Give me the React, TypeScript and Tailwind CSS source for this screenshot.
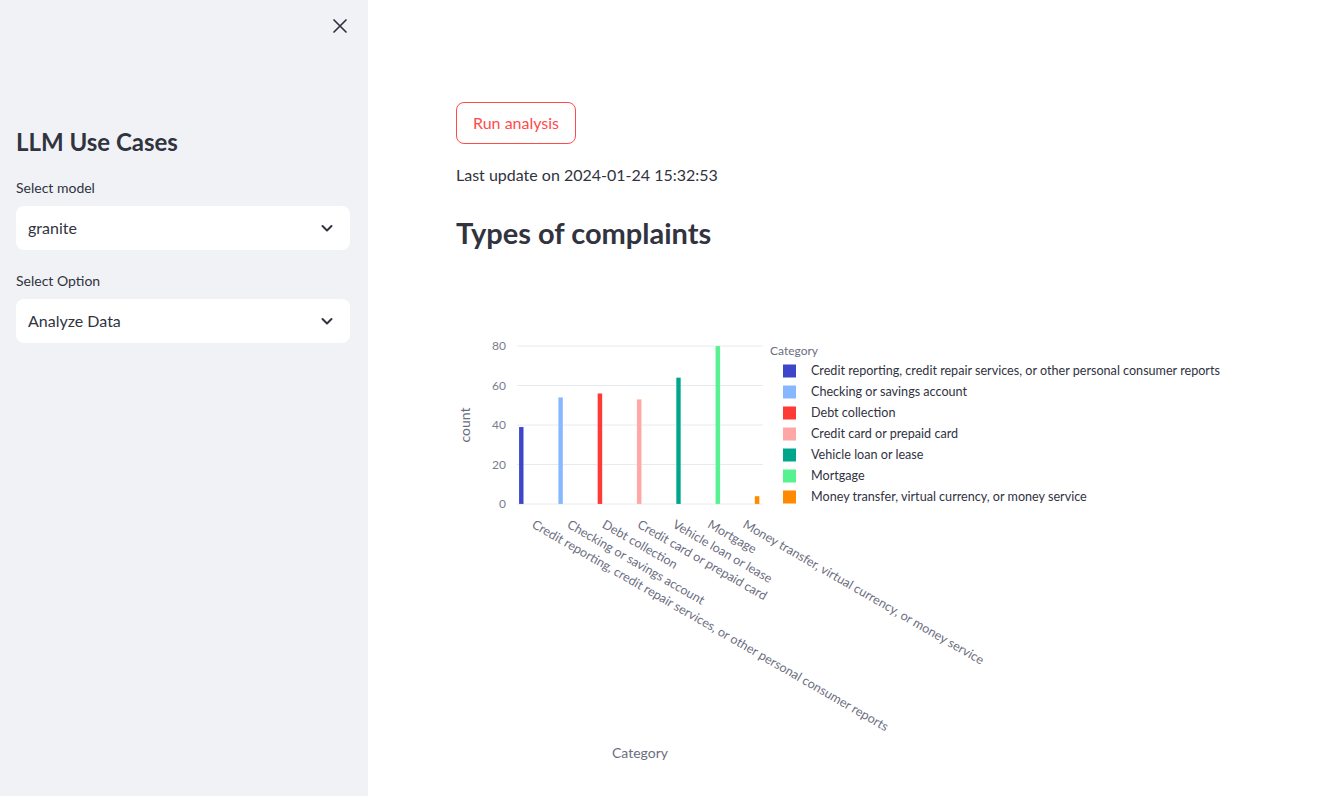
import React from "react";

const categories = [
  { name: "Credit reporting, credit repair services, or other personal consumer reports", value: 39, color: "#3d46c9" },
  { name: "Checking or savings account", value: 54, color: "#87b7ff" },
  { name: "Debt collection", value: 56, color: "#ff3a34" },
  { name: "Credit card or prepaid card", value: 53, color: "#ffa6a6" },
  { name: "Vehicle loan or lease", value: 64, color: "#00a68c" },
  { name: "Mortgage", value: 80, color: "#56f290" },
  { name: "Money transfer, virtual currency, or money service", value: 4, color: "#ff8a00" },
];

const SelectBox = ({ label, value }: { label: string; value: string }) => {
  return (
    <div className="flex flex-col">
      <label className="mb-[8px] text-[14px] leading-[20px] text-[#31333f]">{label}</label>
      <div className="flex h-[44px] items-center justify-between rounded-lg bg-white pl-3 pr-[16px] text-[16px] text-[#31333f]">
        <span>{value}</span>
        <svg width="14" height="14" viewBox="0 0 14 14" fill="none">
          <path d="M2.5 5 L7 9.5 L11.5 5" stroke="#31333f" strokeWidth="2" strokeLinecap="round" strokeLinejoin="round" />
        </svg>
      </div>
    </div>
  );
};

const Chart = () => {
  const y0 = 503;
  const scale = 1.975;
  const plotLeft = 517;
  const plotRight = 763;
  const slot = (plotRight - plotLeft) / 7;
  const ticks = [0, 20, 40, 60, 80];
  const font = "Lato, 'Noto Sans', sans-serif";

  return (
    <svg width="964" height="510" viewBox="368 270 964 510" className="block">
      {ticks.map((t) => (
        <g key={t}>
          <line x1={plotLeft} x2={plotRight} y1={y0 - t * scale} y2={y0 - t * scale} stroke="#e6eaf1" strokeWidth="1" />
          <text x={506} y={y0 - t * scale + 4} textAnchor="end" fontSize="12" fill="#7a7c8f" fontFamily={font}>
            {t}
          </text>
        </g>
      ))}
      <text x={470} y={424} transform="rotate(-90 470 424)" textAnchor="middle" fontSize="14" fill="#6b6d80" fontFamily={font}>
        count
      </text>

      {categories.map((c, i) => {
        const x = 519 + i * 39.3;
        const h = c.value * scale;
        return <rect key={c.name} x={x} y={y0 - h} width={4.6} height={h} fill={c.color} stroke="#ffffff" strokeOpacity="0.4" strokeWidth="0.4" />;
      })}

      {categories.map((c, i) => {
        const tx = plotLeft + slot * (i + 0.5) - 3.5;
        return (
          <text key={c.name} x={tx} y={526} transform={`rotate(30 ${tx} 526)`} fontSize="12.6" fill="#6b6d80" fontFamily={font}>
            {c.name}
          </text>
        );
      })}

      <text x={640} y={757} textAnchor="middle" fontSize="14" fill="#6b6d80" fontFamily={font}>
        Category
      </text>

      <text x={770} y={354} fontSize="12" fill="#6b6d80" fontFamily={font}>
        Category
      </text>
      {categories.map((c, i) => {
        const cy = 370 + i * 21;
        return (
          <g key={c.name}>
            <rect x={783} y={cy - 6.5} width={13} height={13} fill={c.color} />
            <text x={811} y={cy + 4} fontSize="12.6" fill="#31333f" fontFamily={font}>
              {c.name}
            </text>
          </g>
        );
      })}
    </svg>
  );
};

const App = () => {
  return (
    <div className="flex h-[796px] w-[1332px] overflow-hidden bg-white font-['Lato','Noto_Sans',sans-serif] text-[#31333f]">
      <aside className="flex w-[368px] shrink-0 flex-col bg-[#f0f2f6] pl-4 pr-[18px]">
        <div className="flex justify-end pt-[18px] pr-[2px]">
          <svg width="16" height="16" viewBox="0 0 16 16" fill="none">
            <path d="M2 2 L14 14 M14 2 L2 14" stroke="#31333f" strokeWidth="1.7" strokeLinecap="round" />
          </svg>
        </div>
        <h2 className="mt-[92px] text-[24px] leading-[32px] font-bold text-[#31333f]">LLM Use Cases</h2>
        <div className="mt-[20px] flex flex-col gap-[21px]">
          <SelectBox label="Select model" value="granite" />
          <SelectBox label="Select Option" value="Analyze Data" />
        </div>
      </aside>

      <main className="flex flex-1 flex-col pt-[102px]">
        <div className="pl-[88px]">
          <button className="h-[42px] rounded-lg border border-[#ff4b4b] bg-white px-[16px] text-[16px] text-[#ff4b4b]">
            Run analysis
          </button>
          <p className="mt-[19px] text-[16px] leading-[24px] text-[#31333f]">Last update on 2024-01-24 15:32:53</p>
          <h3 className="mt-[28px] text-[29px] leading-[36px] font-bold text-[#31333f]">Types of complaints</h3>
        </div>
        <div className="mt-[20px]">
          <Chart />
        </div>
      </main>
    </div>
  );
};

export default App;
